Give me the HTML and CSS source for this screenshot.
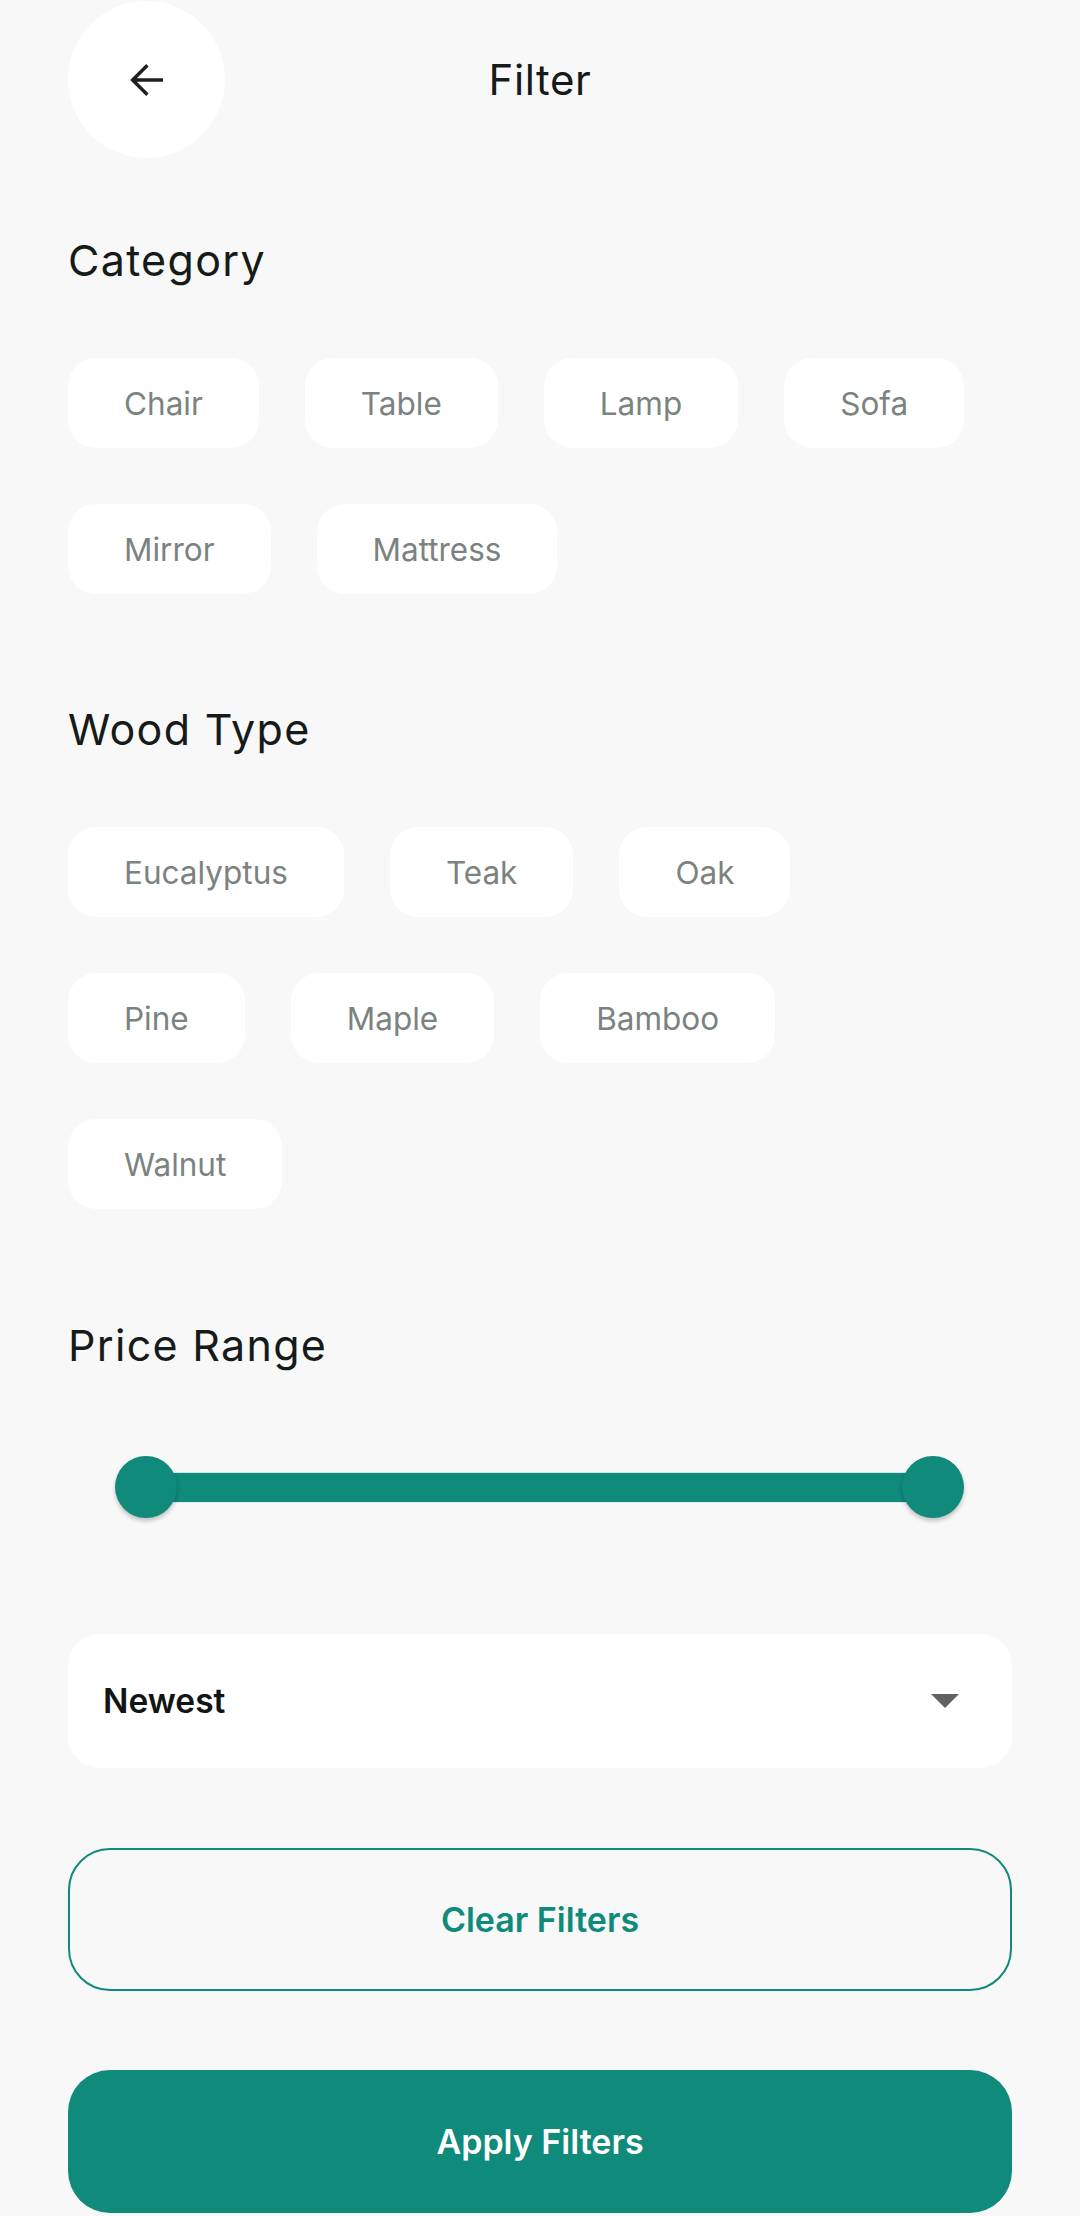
FILE: index.html
```html
<!DOCTYPE html>
<html lang="en">
<head>
<meta charset="utf-8">
<title>Filter</title>
<link rel="stylesheet" href="styles.css">
</head>
<body>
<div class="page">
  <header class="header">
    <button class="back" aria-label="Back">
      <svg viewBox="0 0 24 24" width="48" height="48"><path d="M20 12H5 M12.2 4.6 L4.8 12 L12.2 19.4" fill="none" stroke="#1b1f1e" stroke-width="1.7" stroke-linecap="butt" stroke-linejoin="miter"/></svg>
    </button>
    <h1 class="title">Filter</h1>
    <span class="spacer"></span>
  </header>

  <section class="section">
    <h2 class="heading">Category</h2>
    <div class="chips">
      <span class="chip">Chair</span>
      <span class="chip">Table</span>
      <span class="chip">Lamp</span>
      <span class="chip">Sofa</span>
      <span class="chip">Mirror</span>
      <span class="chip">Mattress</span>
    </div>
  </section>

  <section class="section">
    <h2 class="heading">Wood Type</h2>
    <div class="chips">
      <span class="chip">Eucalyptus</span>
      <span class="chip">Teak</span>
      <span class="chip">Oak</span>
      <span class="chip">Pine</span>
      <span class="chip">Maple</span>
      <span class="chip">Bamboo</span>
      <span class="chip">Walnut</span>
    </div>
  </section>

  <section class="section">
    <h2 class="heading">Price Range</h2>
    <div class="slider">
      <span class="thumb"></span>
      <span class="track"></span>
      <span class="thumb"></span>
    </div>
  </section>

  <div class="dropdown">
    <span class="dropdown-value">Newest</span>
    <span class="caret"></span>
  </div>

  <button class="btn btn-outline">Clear Filters</button>
  <button class="btn btn-solid">Apply Filters</button>
</div>
</body>
</html>
```
FILE: styles.css
```css
* { box-sizing: border-box; }
html, body {
  margin: 0;
  padding: 0;
  background: #f8f8f8;
}
body {
  font-family: Inter, "Noto Sans", Roboto, sans-serif;
  color: #161a19;
  height: 2216px;
  overflow: hidden;
}
.page {
  padding: 1px 68px 0 68px;
  display: flex;
  flex-direction: column;
}
.header {
  display: grid;
  grid-template-columns: 157px 1fr 157px;
  align-items: center;
  height: 157px;
}
.back {
  width: 157px;
  height: 157px;
  border-radius: 50%;
  background: #ffffff;
  border: none;
  padding: 0;
  display: flex;
  align-items: center;
  justify-content: center;
}
.back svg { display: block; }
.title {
  margin: 0;
  text-align: center;
  font-size: 42px;
  font-weight: 400;
  line-height: 50px;
  letter-spacing: 0.6px;
  color: #161a19;
}
.section {
  display: flex;
  flex-direction: column;
}
.heading {
  margin: 0;
  font-size: 43px;
  font-weight: 400;
  line-height: 48px;
  letter-spacing: 1.3px;
  color: #161a19;
}
.section:nth-of-type(1) .heading { margin-top: 78px; }
.section:nth-of-type(2) .heading { margin-top: 111px; }
.section:nth-of-type(3) .heading { margin-top: 112px; }
.chips {
  margin-top: 74px;
  display: flex;
  flex-wrap: wrap;
  column-gap: 46px;
  row-gap: 56px;
}
.chip {
  height: 90px;
  padding: 0 56px;
  display: inline-flex;
  align-items: center;
  background: #ffffff;
  border-radius: 28px;
  font-size: 31.5px;
  color: #7b8380;
}
.slider {
  margin: 87px 48px 0 47px;
  display: flex;
  align-items: center;
  height: 62px;
}
.thumb {
  position: relative;
  z-index: 1;
  width: 62px;
  height: 62px;
  flex: 0 0 62px;
  border-radius: 50%;
  background: #0f8a7b;
  box-shadow: 0 3px 4px rgba(0, 0, 0, 0.22);
}
.track {
  flex: 1;
  height: 29px;
  margin: 0 -31px;
  background: #0f8a7b;
  box-shadow: 0 -1px 0 #c9ece7, 0 1px 0 #d6f1ed;
}
.dropdown {
  margin-top: 116px;
  height: 134px;
  background: #ffffff;
  border-radius: 32px;
  display: flex;
  align-items: center;
  justify-content: space-between;
  padding: 0 53px 0 35px;
}
.dropdown-value {
  font-size: 33.5px;
  font-weight: 600;
  color: #111615;
}
.caret {
  width: 0;
  height: 0;
  border-left: 14px solid transparent;
  border-right: 14px solid transparent;
  border-top: 14px solid #616161;
}
.btn {
  height: 143px;
  border-radius: 42px;
  font-family: Inter, "Noto Sans", Roboto, sans-serif;
  font-size: 34px;
  font-weight: 600;
  display: flex;
  align-items: center;
  justify-content: center;
  width: 100%;
}
.btn-outline {
  margin-top: 80px;
  background: transparent;
  border: 2.5px solid #0f8a7b;
  color: #0f8a7b;
}
.btn-solid {
  margin-top: 79px;
  background: #0f8a7b;
  border: none;
  color: #ffffff;
}
```
